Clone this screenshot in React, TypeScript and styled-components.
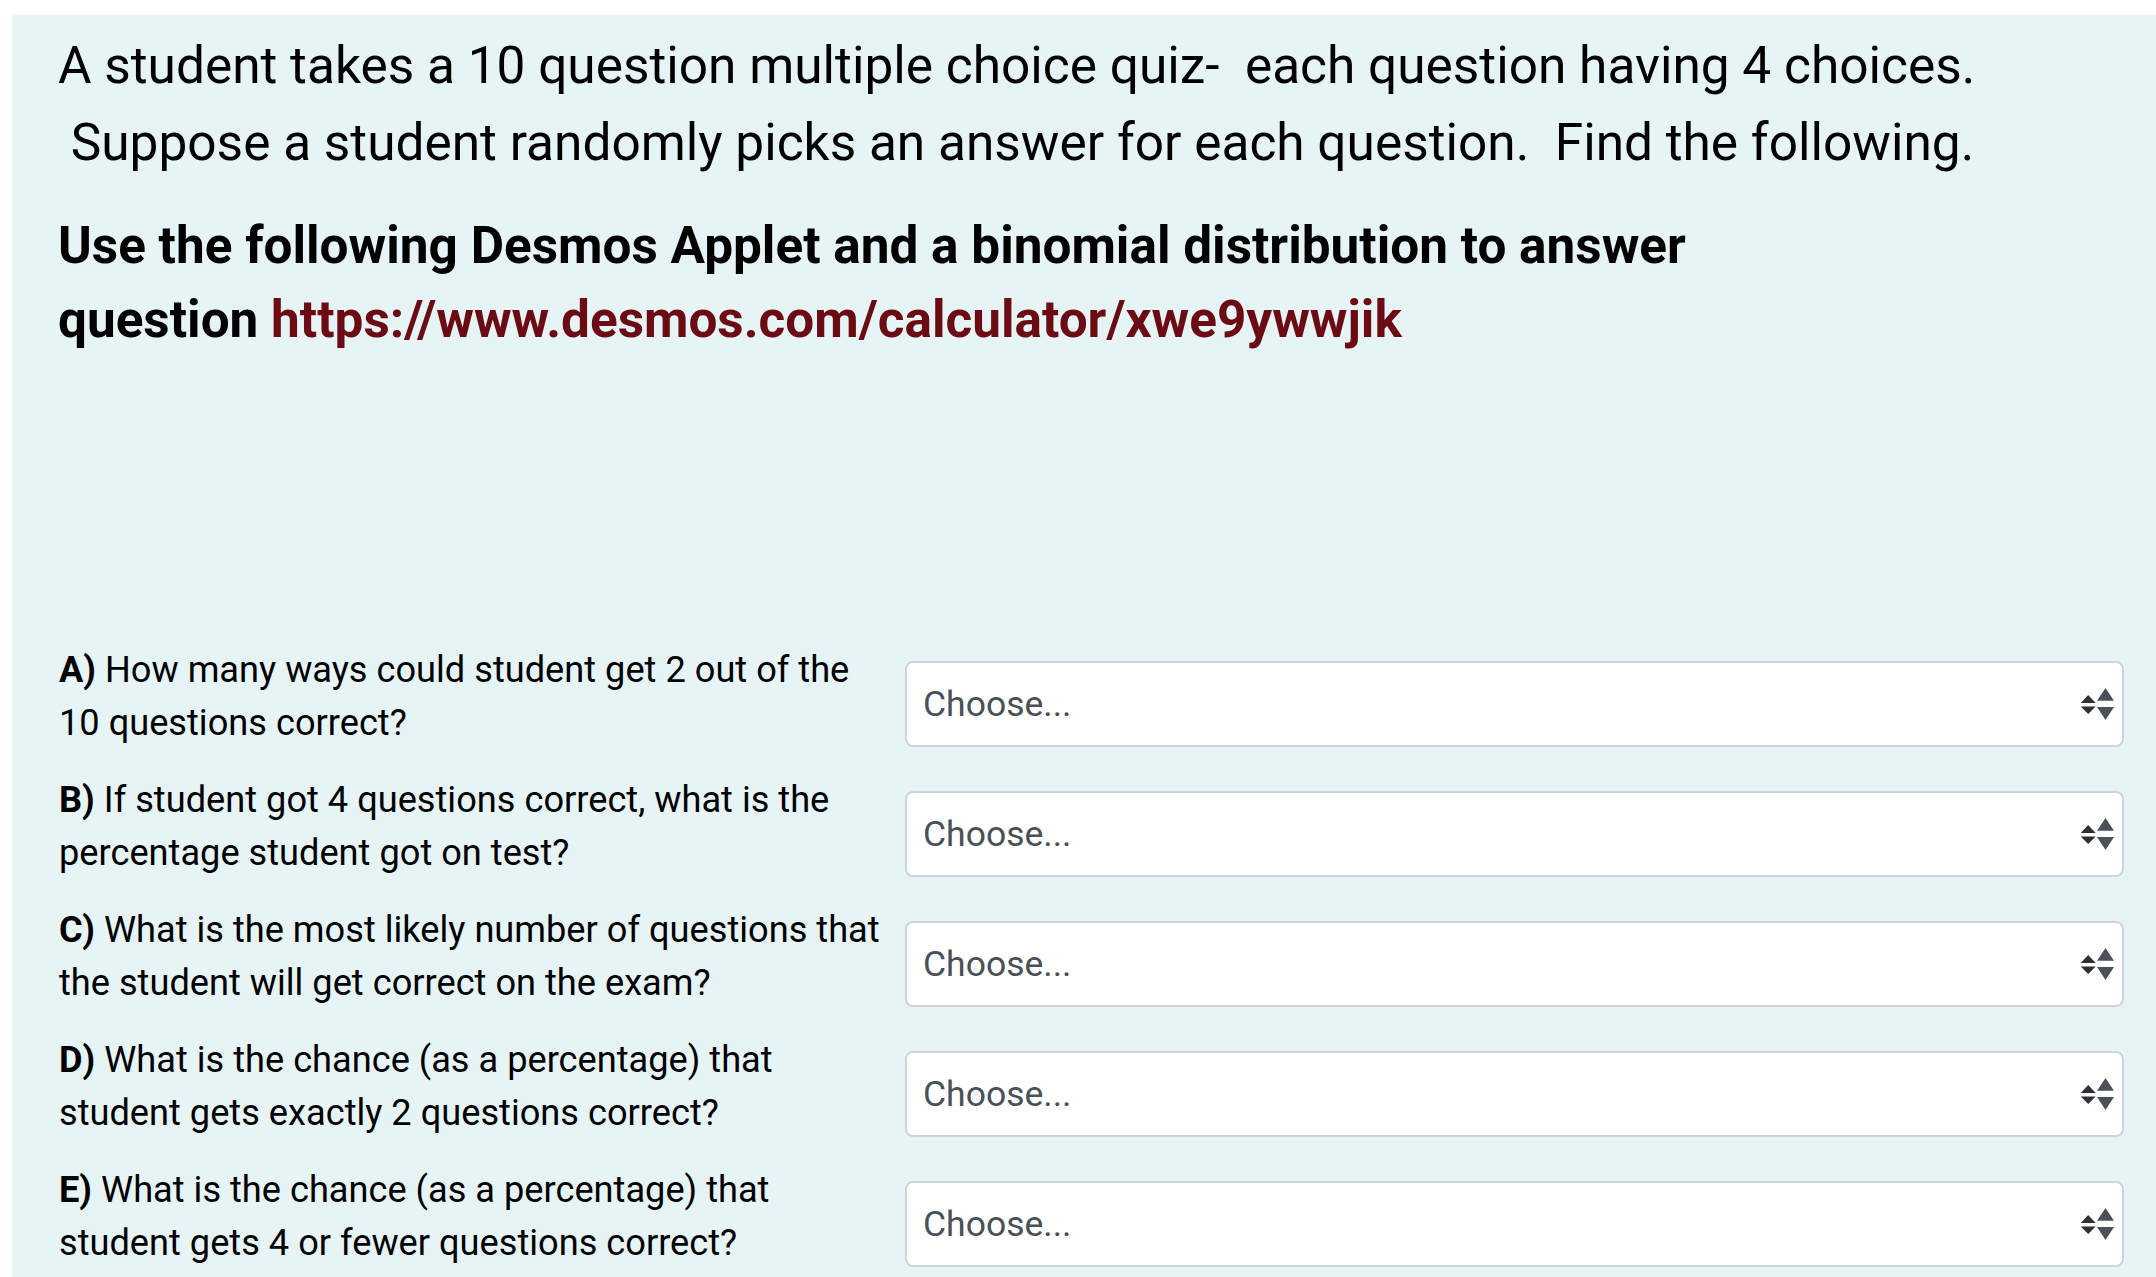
import React from 'react'
import styled, { createGlobalStyle } from 'styled-components'

const GlobalStyle = createGlobalStyle`
  html, body {
    margin: 0;
    padding: 0;
    background: #ffffff;
  }
  body {
    font-family: Roboto, 'Liberation Sans', sans-serif;
    color: #000000;
  }
`

const Panel = styled.div`
  box-sizing: border-box;
  margin: 15px 0 0 12px;
  min-height: 1262px;
  padding: 12px 32px 0 46px;
  background: #e7f4f6;
`

const Intro = styled.p`
  margin: 0 0 28px;
  font-size: 51.4px;
  line-height: 77px;
  white-space: pre-wrap;
`

const Heading = styled.p`
  margin: 0;
  font-size: 51.3px;
  font-weight: 700;
  line-height: 74px;
`

const NoWrap = styled.span`
  white-space: nowrap;
`

const Link = styled.a`
  color: #6b0b13;
  text-decoration: none;
`

const Questions = styled.div`
  margin-top: 286px;
  display: flex;
  flex-direction: column;
  gap: 24px;
`

const Row = styled.div`
  display: grid;
  grid-template-columns: 832px 1fr;
  column-gap: 15px;
  align-items: start;
`

const Label = styled.div`
  padding-left: 1px;
  font-size: 36.2px;
  line-height: 53px;
`

const Letter = styled.b`
  font-weight: 700;
`

const SelectBox = styled.div`
  box-sizing: border-box;
  margin-top: 18px;
  height: 86px;
  display: flex;
  align-items: center;
  justify-content: space-between;
  padding: 0 6px 0 16px;
  background: #ffffff;
  border: 2px solid #ced4da;
  border-radius: 8px;
  color: #495057;
  font-size: 35.5px;
`

const Arrows = () => (
  <svg width="36" height="36" viewBox="0 0 36 36">
    <path d="M0.7 17 L8.2 9 L15.7 17 Z" fill="#2d3136" />
    <path d="M0.7 20.5 L15.7 20.5 L8.2 28 Z" fill="#2d3136" />
    <path d="M17 14.7 L25.5 2 L34 14.7 Z" fill="#4b5158" />
    <path d="M17 21 L34 21 L25.5 34 Z" fill="#4b5158" />
  </svg>
)

const questions = [
  { letter: 'A)', text: 'How many ways could student get 2 out of the 10 questions correct?' },
  { letter: 'B)', text: 'If student got 4 questions correct, what is the percentage student got on test?' },
  { letter: 'C)', text: 'What is the most likely number of questions that the student will get correct on the exam?' },
  { letter: 'D)', text: 'What is the chance (as a percentage) that student gets exactly 2 questions correct?' },
  { letter: 'E)', text: 'What is the chance (as a percentage) that student gets 4 or fewer questions correct?' },
]

const App: React.FC = () => (
  <>
    <GlobalStyle />
    <Panel>
      <Intro>
        {'A student takes a 10 question multiple choice quiz-  each question having 4 choices.\n Suppose a student randomly picks an answer for each question.  Find the following.'}
      </Intro>
      <Heading>
        Use the following Desmos Applet and a binomial distribution to answer{' '}
        <NoWrap>
          question <Link href="#">https://www.desmos.com/calculator/xwe9ywwjik</Link>
        </NoWrap>
      </Heading>
      <Questions>
        {questions.map((q) => (
          <Row key={q.letter}>
            <Label>
              <Letter>{q.letter}</Letter> {q.text}
            </Label>
            <SelectBox>
              <span>Choose...</span>
              <Arrows />
            </SelectBox>
          </Row>
        ))}
      </Questions>
    </Panel>
  </>
)

export default App
